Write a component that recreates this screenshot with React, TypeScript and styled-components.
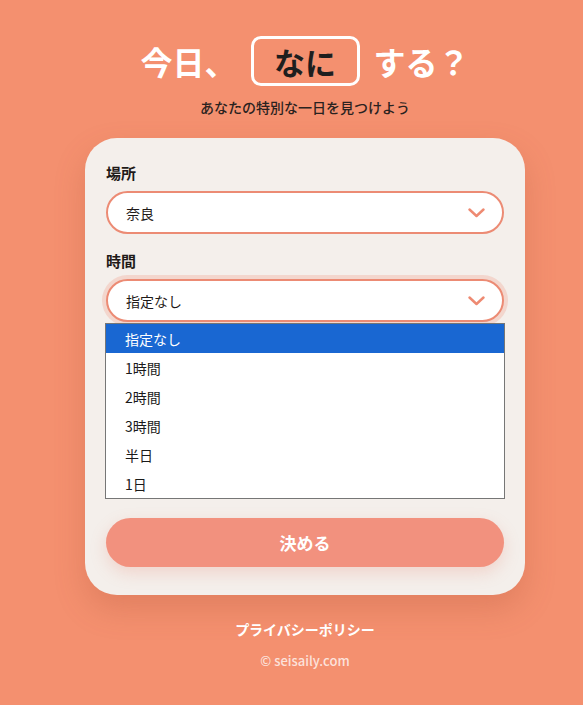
import React from "react";
import styled, { createGlobalStyle } from "styled-components";

const GlobalStyle = createGlobalStyle`
  html, body {
    margin: 0;
    padding: 0;
    background: #f4906f;
  }
  body {
    font-family: "Noto Sans CJK JP", "Noto Sans", sans-serif;
  }
`;

const timeOptions = ["指定なし", "1時間", "2時間", "3時間", "半日", "1日"];

const Chevron: React.FC = () => (
  <svg width="17" height="10" viewBox="0 0 17 10" fill="none">
    <path
      d="M1.5 1.5 L8.5 8 L15.5 1.5"
      stroke="#ee8a72"
      strokeWidth="2.4"
      strokeLinecap="round"
      strokeLinejoin="round"
    />
  </svg>
);

const App: React.FC = () => {
  return (
    <Page>
      <GlobalStyle />
      <Heading>
        <span>今日、</span>
        <WordBox>なに</WordBox>
        <span>する？</span>
      </Heading>
      <Subtitle>あなたの特別な一日を見つけよう</Subtitle>

      <Card>
        <Field>
          <Label>場所</Label>
          <Select>
            <span>奈良</span>
            <Chevron />
          </Select>
        </Field>

        <Field>
          <Label>時間</Label>
          <SelectWrap>
            <Select focused>
              <span>指定なし</span>
              <Chevron />
            </Select>
            <Listbox>
              {timeOptions.map((opt, i) => (
                <Option key={opt} selected={i === 0}>
                  {opt}
                </Option>
              ))}
            </Listbox>
          </SelectWrap>
        </Field>

        <SubmitButton>決める</SubmitButton>
      </Card>

      <FooterLink>プライバシーポリシー</FooterLink>
      <Copyright>© seisaily.com</Copyright>
    </Page>
  );
};

const Page = styled.div`
  min-height: 705px;
  display: flex;
  flex-direction: column;
  align-items: center;
  padding: 36px 0 0 27px;
  box-sizing: border-box;
`;

const Heading = styled.h1`
  margin: 0;
  display: flex;
  align-items: center;
  gap: 14px;
  font-size: 32px;
  font-weight: 700;
  color: #ffffff;
  line-height: 1;
`;

const WordBox = styled.span`
  display: inline-flex;
  align-items: center;
  justify-content: center;
  width: 103px;
  height: 44px;
  border: 3px solid #ffffff;
  border-radius: 10px;
  color: #1e1e1e;
  font-size: 31px;
`;

const Subtitle = styled.p`
  margin: 12px 0 0;
  font-size: 14px;
  font-weight: 500;
  color: #2a2220;
  line-height: 19px;
`;

const Card = styled.div`
  margin-top: 21px;
  width: 440px;
  box-sizing: border-box;
  padding: 24px 21px 28px;
  background: #f4efeb;
  border-radius: 32px;
  box-shadow: 0 14px 30px rgba(170, 80, 50, 0.25);
  display: flex;
  flex-direction: column;
  gap: 16px;
`;

const Field = styled.div`
  display: flex;
  flex-direction: column;
  gap: 7px;
`;

const SelectWrap = styled.div`
  display: flex;
  flex-direction: column;
`;

const Label = styled.div`
  font-size: 15px;
  font-weight: 700;
  color: #1f1a18;
  line-height: 22px;
`;

const Select = styled.div<{ focused?: boolean }>`
  height: 43px;
  box-sizing: border-box;
  border: 2px solid #ec8b74;
  border-radius: 22px;
  background: #ffffff;
  display: flex;
  align-items: center;
  justify-content: space-between;
  padding: 0 17px 0 18px;
  font-size: 14px;
  color: #1f1a18;
  box-shadow: ${(p) => (p.focused ? "0 0 0 4px rgba(238, 140, 115, 0.25)" : "none")};
`;

const Listbox = styled.ul`
  margin: 1px -1px 0;
  padding: 0;
  list-style: none;
  background: #ffffff;
  border: 1px solid #767676;
  position: relative;
  z-index: 1;
`;

const Option = styled.li<{ selected?: boolean }>`
  height: 29px;
  display: flex;
  align-items: center;
  padding-left: 19px;
  font-size: 14px;
  color: ${(p) => (p.selected ? "#ffffff" : "#1a1a1a")};
  background: ${(p) => (p.selected ? "#1967d2" : "transparent")};
`;

const SubmitButton = styled.button`
  margin-top: 3px;
  height: 49px;
  border: none;
  border-radius: 25px;
  background: #f2917e;
  color: #ffffff;
  font-family: inherit;
  font-size: 17px;
  font-weight: 700;
  box-shadow: 0 6px 16px rgba(230, 130, 110, 0.25);
`;

const FooterLink = styled.a`
  margin-top: 25px;
  font-size: 14px;
  font-weight: 700;
  color: #ffffff;
  line-height: 19px;
`;

const Copyright = styled.div`
  margin-top: 13px;
  font-size: 13px;
  font-weight: 500;
  color: rgba(255, 255, 255, 0.75);
  line-height: 18px;
`;

export default App;
